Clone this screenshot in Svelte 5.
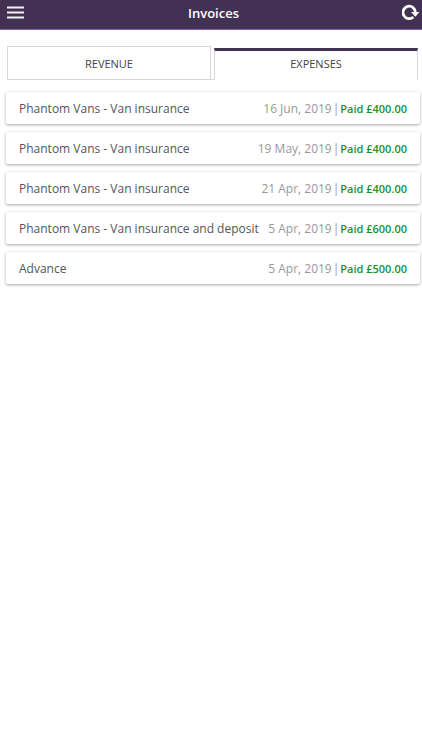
<script>
    let activeTab = 'expenses';

    const invoices = {
        revenue: [],
        expenses: [
            { title: 'Phantom Vans - Van insurance', date: '16 Jun, 2019', amount: '£400.00' },
            { title: 'Phantom Vans - Van insurance', date: '19 May, 2019', amount: '£400.00' },
            { title: 'Phantom Vans - Van insurance', date: '21 Apr, 2019', amount: '£400.00' },
            { title: 'Phantom Vans - Van insurance and deposit', date: '5 Apr, 2019', amount: '£600.00' },
            { title: 'Advance', date: '5 Apr, 2019', amount: '£500.00' }
        ]
    };
</script>

<header>
    <button class="icon_button" aria-label="Menu">
        <svg width="18" height="14" viewBox="0 0 18 14">
            <path d="M0 1.5H17M0 6.5H17M0 11.5H17" stroke="#f3eef6" stroke-width="1.8" />
        </svg>
    </button>
    <h1>Invoices</h1>
    <button class="icon_button" aria-label="Refresh">
        <svg width="18" height="18" viewBox="0 0 18 18">
            <path d="M11.4 13A6.2 6.2 0 1 1 13.4 8.5" fill="none" stroke="#fff" stroke-width="2.8" />
            <path d="M9 8H17.4L13.4 12.8Z" fill="#fff" />
        </svg>
    </button>
</header>

<main>
    <div class="tabs" role="tablist">
        <button class="tab" class:active={activeTab == 'revenue'} role="tab" aria-selected={activeTab == 'revenue'} on:click={() => activeTab = 'revenue'}>REVENUE</button>
        <span class="tab_gap"></span>
        <button class="tab" class:active={activeTab == 'expenses'} role="tab" aria-selected={activeTab == 'expenses'} on:click={() => activeTab = 'expenses'}>EXPENSES</button>
    </div>

    <ul>
        {#each invoices[activeTab] as invoice}
            <li>
                <span class="title">{invoice.title}</span>
                <span class="details">
                    <span>{invoice.date}</span>
                    <span>|</span>
                    <b>Paid {invoice.amount}</b>
                </span>
            </li>
        {/each}
    </ul>
</main>

<style>
    :global(body) {
        margin: 0;
        background: #fff;
        font-family: "Open Sans", "Noto Sans", sans-serif;
    }

    header {
        display: flex;
        align-items: center;
        justify-content: space-between;
        height: 29px;
        padding: 0 2px 4px 7px;
        box-sizing: border-box;
        background: #433153;
        box-shadow: 0 1px 0 #7d63b0;
    }

    h1 {
        margin: 0;
        color: #fff;
        font-size: 13px;
        font-weight: 600;
        line-height: 20px;
    }

    .icon_button {
        display: flex;
        padding: 0;
        border: none;
        background: none;
        cursor: pointer;
    }

    main {
        padding: 17px 2px 8px 6px;
    }

    .tabs {
        display: flex;
        padding: 0 2px 0 1px;
    }

    .tab {
        flex: 1;
        height: 34px;
        padding: 0;
        border: 1px solid #d9d9d9;
        background: #fff;
        color: #444;
        font-family: inherit;
        font-size: 11px;
        cursor: pointer;
    }

    .tab.active {
        height: 32px;
        margin-top: 2px;
        padding-bottom: 3px;
        border-top: 3px solid #433153;
        border-bottom-color: #fff;
    }

    .tab_gap {
        width: 3px;
        border-bottom: 1px solid #d9d9d9;
    }

    ul {
        display: flex;
        flex-direction: column;
        gap: 8px;
        margin: 12px 0 0;
        padding: 0;
        list-style: none;
    }

    li {
        display: flex;
        align-items: center;
        justify-content: space-between;
        height: 32px;
        padding: 0 13px;
        border-radius: 2px;
        background: #fff;
        box-shadow: 0 1px 3px rgba(0, 0, 0, 0.35);
        font-size: 12px;
        white-space: nowrap;
    }

    .title {
        color: #555;
    }

    .details {
        display: flex;
        align-items: baseline;
        gap: 1px;
        color: #999;
    }

    .details b {
        color: #1c901f;
        font-size: 11px;
        font-weight: 600;
    }
</style>
